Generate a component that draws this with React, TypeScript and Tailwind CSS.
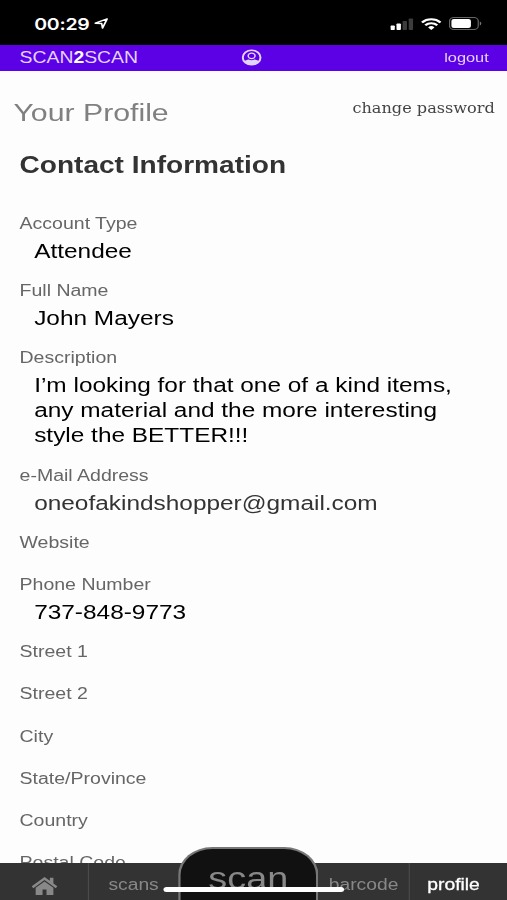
type Field = { label: string; lines?: string[]; link?: boolean };

const fields: Field[] = [
  { label: "Account Type", lines: ["Attendee"] },
  { label: "Full Name", lines: ["John Mayers"] },
  {
    label: "Description",
    lines: [
      "I’m looking for that one of a kind items,",
      "any material and the more interesting",
      "style the BETTER!!!",
    ],
  },
  { label: "e-Mail Address", lines: ["oneofakindshopper@gmail.com"], link: true },
  { label: "Website" },
  { label: "Phone Number", lines: ["737-848-9773"] },
  { label: "Street 1" },
  { label: "Street 2" },
  { label: "City" },
  { label: "State/Province" },
  { label: "Country" },
  { label: "Postal Code" },
];

function StatusBar() {
  return (
    <div className="flex h-[45px] shrink-0 items-center bg-black pl-[28px] pr-[20.5px] pt-[2px] text-white">
      <span className="font-['Inter',sans-serif] text-[16px] font-semibold tracking-[-0.2px]">00:29</span>
      <svg className="ml-[4px] h-[13px] w-[12px]" viewBox="0 0 13 13" fill="none" stroke="currentColor" strokeWidth="1.5" strokeLinejoin="round">
        <path d="M1.2 6.2 11.7 1.5 7.6 11.5 6.9 6.5Z" />
      </svg>
      <div className="ml-auto flex items-center gap-[6px]">
        <svg className="h-[12px] w-[19px]" viewBox="0 0 19 12">
          <rect x="0" y="7.5" width="3.6" height="4.5" rx="0.8" fill="#fff" />
          <rect x="5" y="5.5" width="3.6" height="6.5" rx="0.8" fill="#fff" />
          <rect x="10" y="3" width="3.6" height="9" rx="0.8" fill="#3c3c3c" />
          <rect x="15" y="0.5" width="3.6" height="11.5" rx="0.8" fill="#3c3c3c" />
        </svg>
        <svg className="h-[12px] w-[17px]" viewBox="0 0 17 12" fill="none" stroke="#fff" strokeWidth="2.1">
          <path d="M0.9 4.4a10.8 10.8 0 0 1 15.2 0M3.6 7.3a6.9 6.9 0 0 1 9.8 0" />
          <path d="M8.5 12 5.9 9.4a3.7 3.7 0 0 1 5.2 0Z" fill="#fff" stroke="none" />
        </svg>
        <svg className="h-[13px] w-[27px]" viewBox="0 0 27 13">
          <rect x="0.5" y="0.5" width="23.5" height="12" rx="3.5" fill="none" stroke="#666" />
          <rect x="2" y="2" width="16" height="9" rx="2" fill="#fff" />
          <path d="M25.3 4.5a2.3 2.3 0 0 1 0 4Z" fill="#777" />
        </svg>
      </div>
    </div>
  );
}

function FieldRow({ label, lines = [], link }: Field) {
  return (
    <div className="mb-[16.2px]">
      <div className="pb-[4px] text-[16px] leading-[22px] text-[#666]">{label}</div>
      {lines.map((line) => (
        <div
          key={line}
          className={`pl-[12px] text-[20px] leading-[25px] whitespace-nowrap ${link ? "text-[#333]" : "text-black"}`}
        >
          {line}
        </div>
      ))}
    </div>
  );
}

function BottomNav() {
  return (
    <nav className="relative z-10 flex h-[37px] shrink-0 bg-[#333] text-[15.8px] text-[#888]">
      <div className="flex w-[73px] items-center justify-center border-r border-[#4a4a4a] pt-[8px]">
        <svg className="h-[18px] w-[21px]" viewBox="0 0 26 18" preserveAspectRatio="none" fill="currentColor">
          <path d="M13 0 0 9.3 1.6 11.2 13 3 24.4 11.2 26 9.3 22 6.4V0.8h-3.6v3Z" />
          <path d="M13 4.4 4 10.8V18h7v-5.4h4V18h7v-7.2Z" />
        </svg>
      </div>
      <div className="flex w-[73px] items-center justify-center pt-[6px]">scans</div>
      <div className="-mt-[16px] flex h-[53px] w-[115px] items-start justify-center rounded-t-[28px] border-2 border-b-0 border-[#777] bg-[#111] pt-[12px] text-[31px] leading-[36px]">
        scan
      </div>
      <div className="flex w-[75px] items-center justify-center border-r border-[#4a4a4a] pt-[6px]">barcode</div>
      <div className="flex flex-1 items-center justify-center pr-[8px] pt-[6px] text-white [-webkit-text-stroke:0.3px_white]">
        profile
      </div>
      {/* home indicator */}
      <div className="absolute bottom-[8px] left-[134px] h-[5px] w-[148px] rounded-full bg-white" />
    </nav>
  );
}

export default function App() {
  return (
    <div className="h-[900px] w-[507px] overflow-hidden bg-[#fdfdfd]">
      {/* the phone screen is shown wider than it is laid out */}
      <div className="flex h-[900px] w-[415.6px] origin-top-left scale-x-[1.22] flex-col font-['Liberation_Sans',Arial,sans-serif]">
        <StatusBar />
        <header className="grid h-[26px] shrink-0 grid-cols-3 items-center bg-[#5c00e6] pl-[16px] pr-[15px] text-[#e3d4fb]">
          <div className="text-[15.9px]">
            SCAN<b className="text-white">2</b>SCAN
          </div>
          <svg className="-mt-px mr-[4px] h-[17px] w-[16.5px] justify-self-center" viewBox="0 0 20 20" fill="none">
            <circle cx="10" cy="10" r="8.8" stroke="currentColor" strokeWidth="2" />
            <circle cx="10" cy="8" r="3.4" stroke="currentColor" strokeWidth="1.5" />
            <path d="M2.5 15c1-1.6 2.7-2.3 4.6-2.6 1.8 1.1 4 1.1 5.8 0 1.9.3 3.6 1 4.6 2.6a8.8 8.8 0 0 1-15 0Z" fill="currentColor" />
          </svg>
          <div className="justify-self-end text-[13.4px]">logout</div>
        </header>
        <main className="min-h-0 flex-1 overflow-hidden">
          <div className="flex items-start justify-between pl-[11px] pr-[10px] pt-[27px]">
            <h1 className="text-[24.8px] leading-[30px] text-[#808080]">Your Profile</h1>
            <a className="font-['DejaVu_Serif',serif] text-[14.7px] leading-[20px] text-[#444] font-stretch-condensed">
              change password
            </a>
          </div>
          <section className="pl-[16px]">
            <h2 className="mt-[22px] text-[23px] font-bold leading-[30px] text-[#333]">Contact Information</h2>
            <div className="mt-[33px]">
              {fields.map((field) => (
                <FieldRow key={field.label} {...field} />
              ))}
            </div>
          </section>
        </main>
        <BottomNav />
      </div>
    </div>
  );
}
